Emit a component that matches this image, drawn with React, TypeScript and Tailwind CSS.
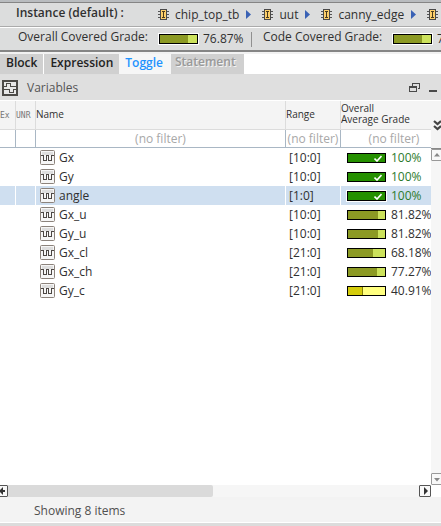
import React from "react";

type Variable = { name: string; range: string; grade: number };

const variables: Variable[] = [
  { name: "Gx", range: "[10:0]", grade: 100 },
  { name: "Gy", range: "[10:0]", grade: 100 },
  { name: "angle", range: "[1:0]", grade: 100 },
  { name: "Gx_u", range: "[10:0]", grade: 81.82 },
  { name: "Gy_u", range: "[10:0]", grade: 81.82 },
  { name: "Gx_cl", range: "[21:0]", grade: 68.18 },
  { name: "Gx_ch", range: "[21:0]", grade: 77.27 },
  { name: "Gy_c", range: "[21:0]", grade: 40.91 },
];

const path = ["chip_top_tb", "uut", "canny_edge"];

function ChipIcon() {
  return (
    <svg width="11" height="12" viewBox="0 0 11 12" className="shrink-0" shapeRendering="crispEdges" aria-hidden="true">
      <path d="M0 2.5h11M0 5.5h11M0 8.5h11" stroke="#555" />
      <rect x="2.5" y="0.5" width="6" height="10" fill="#ffd06a" stroke="#4a4a4a" />
      <path d="M4 2.5h3M5.5 2v7M4 8.5h3" stroke="#4a3b1c" />
    </svg>
  );
}

function CrumbArrow() {
  return (
    <svg width="5" height="9" viewBox="0 0 5 9" className="shrink-0" aria-hidden="true">
      <path d="M0 0L5 4.5L0 9Z" fill="#3a62b5" />
    </svg>
  );
}

function WaveIcon() {
  return (
    <svg width="15" height="15" viewBox="0 0 15 15" className="shrink-0" aria-hidden="true">
      <rect x="0.5" y="0.5" width="14" height="14" rx="1" fill="#f6f6f6" stroke="#8c837c" />
      <rect x="2" y="2" width="11" height="3" fill="#dedede" />
      <path d="M1 5.5H3.5V10.5H6.5V5.5H8.5V10.5H11.5V5.5H14" fill="none" stroke="#4c4744" shapeRendering="crispEdges" />
    </svg>
  );
}

function GradeBar({ grade, outlined = false }: { grade: number; outlined?: boolean }) {
  const full = grade === 100;
  const low = grade < 50;
  const rest = low ? "bg-[#ffff80]" : "bg-[#cce25c]";
  const fill = full ? "bg-[#259000]" : low ? "bg-[#d4cc0c] border-r border-[#84800a]" : "bg-[#8c9a24]";
  return (
    <span
      className={`relative block h-[10px] w-[39px] shrink-0 border border-black ${rest} ${outlined ? "outline outline-white" : ""}`}
    >
      <span className={`block h-full ${fill}`} style={{ width: `${grade}%` }} />
      {full && (
        <svg width="8" height="7" viewBox="0 0 8 7" className="absolute right-[3px] top-px" aria-hidden="true">
          <path d="M0.5 3.5L3 6L7.5 1" fill="none" stroke="#fff" strokeWidth="1.6" />
        </svg>
      )}
    </span>
  );
}

function ScrollButton({ label, glyph, size, dark }: { label: string; glyph: string; size: string; dark?: boolean }) {
  return (
    <button
      aria-label={label}
      className={`flex shrink-0 items-center justify-center rounded-[1px] border bg-[#f8f8f8] ${size} ${dark ? "border-[#555] text-[#333]" : "border-[#999] text-[#888]"}`}
    >
      <svg width="8" height="8" viewBox="0 0 8 8" className="shrink-0" aria-hidden="true">
        <path d={glyph} fill="currentColor" />
      </svg>
    </button>
  );
}

const headCell = "overflow-hidden whitespace-nowrap border-b border-[#dcdcdc] p-0 text-left font-normal";
const filterCell = "border-b border-[#a9b7c4] bg-white p-0";
const filterInput = "block h-[17px] w-full bg-transparent text-center text-[12px] outline-none placeholder:text-[#a8a8a8]";

export default function App() {
  return (
    <main className="flex h-screen flex-col overflow-hidden bg-white font-['Open_Sans','Noto_Sans',sans-serif] text-[12px] leading-4 text-[#303030]">
      <div className="h-[3px] shrink-0 border-b border-[#858585] bg-[#b9bcbf]" />
      <nav aria-label="Instance" className="flex h-6 shrink-0 items-center whitespace-nowrap border-b border-[#ababab] bg-[#dcdddd] pl-4">
        <span className="w-[142px] shrink-0 pb-1 font-semibold">Instance (default) :</span>
        {path.map((item) => (
          <React.Fragment key={item}>
            <a href="#" className="flex shrink-0 items-center gap-[6px]">
              <ChipIcon />
              {item}
            </a>
            <span className="pl-[7px] pr-[11px]">
              <CrumbArrow />
            </span>
          </React.Fragment>
        ))}
        <ChipIcon />
      </nav>
      <div className="mt-px flex h-6 shrink-0 items-center whitespace-nowrap border-b-2 border-[#858585] bg-[#dcdddd] pl-[18px]">
        <span className="w-[141px] shrink-0 pb-[5px]">Overall Covered Grade:</span>
        <GradeBar grade={76.87} outlined />
        <span className="w-[53px] shrink-0 pl-[5px]">76.87%</span>
        <span className="h-[15px] shrink-0 border-l border-[#909090]" />
        <span className="w-[141px] shrink-0 pb-[5px] pl-[11px]">Code Covered Grade:</span>
        <GradeBar grade={76.87} outlined />
        <span className="pl-[5px]">76.87%</span>
      </div>
      <div role="tablist" className="flex h-[23px] shrink-0 border-b border-t-2 border-b-[#dedede] border-t-[#f2f2f2] bg-white">
        <button role="tab" className="mr-px bg-[#d0d0d0] px-[6px] pb-0.5 font-semibold text-[#222]">Block</button>
        <button role="tab" className="bg-[#d0d0d0] px-[6px] pb-0.5 font-semibold text-[#222]">Expression</button>
        <button role="tab" aria-selected="true" className="bg-[#f6f6f6] pb-0.5 pl-[6px] pr-2 font-semibold text-[#1e93ff]">Toggle</button>
        <button role="tab" disabled className="bg-[#d0d0d0] px-1 pb-1 pr-2 font-semibold text-[#999] [text-shadow:1px_1px_#f4f4f4]">Statement</button>
      </div>
      <header className="flex h-[26px] shrink-0 items-center border-b border-white bg-[#dfdfdf] pl-0.5 pr-1">
        <svg width="16" height="16" viewBox="0 0 16 16" aria-hidden="true">
          <rect x="1" y="1" width="14" height="14" fill="#e8e8e8" stroke="#4c4a47" strokeWidth="2" />
          <path d="M2 6.5H4.5V3.5H8.5V6.5H14M2 9.5H7.5V12.5H11.5V9.5H14" fill="none" stroke="#4c4a47" shapeRendering="crispEdges" />
        </svg>
        <h2 className="flex-1 pl-[9px] text-[#555]">Variables</h2>
        <button aria-label="Restore panel">
          <svg width="11" height="10" viewBox="0 0 11 10" shapeRendering="crispEdges" aria-hidden="true">
            <path d="M3 0.5H10.5V5.5H9M3.5 1V3M0.5 4V8.5H7.5V4" fill="none" stroke="#4a4a4a" />
            <path d="M0 4H8" stroke="#4a4a4a" strokeWidth="2" />
          </svg>
        </button>
        <button aria-label="Minimize panel" className="-mr-1 ml-[9px] w-3">
          <svg width="8" height="10" viewBox="0 0 8 10" aria-hidden="true">
            <path d="M0 8H8" stroke="#4a4a4a" strokeWidth="2" />
          </svg>
        </button>
      </header>
      <section className="flex min-h-0 flex-1">
        <div className="flex min-w-0 flex-1 flex-col">
          <div className="min-h-0 flex-1 overflow-hidden">
            <table className="w-full table-fixed border-separate border-spacing-0">
              <colgroup>
                <col className="w-4" />
                <col className="w-5" />
                <col />
                <col className="w-[55px]" />
                <col className="w-[90px]" />
              </colgroup>
              <thead>
                <tr className="h-[29px] bg-[#f4f4f4] text-[10px] leading-[11px]">
                  <th className={`${headCell} border-r font-['DejaVu_Sans_Mono',monospace] text-[8px] text-[#777]`}>Ex</th>
                  <th className={`${headCell} border-r font-['DejaVu_Sans_Mono',monospace] text-[8px] text-[#777]`}>UNR</th>
                  <th className={`${headCell} border-r pb-0.5`}>Name</th>
                  <th className={`${headCell} border-r pb-0.5`}>Range</th>
                  <th className={`${headCell} pb-0.5`}>
                    <span className="block">Overall</span>
                    <span className="block">Average Grade</span>
                  </th>
                </tr>
                <tr className="h-[18px]">
                  <td className={`${filterCell} border-r`} />
                  <td className={`${filterCell} border-r`} />
                  <td className={`${filterCell} border-r`}>
                    <input aria-label="Filter by name" placeholder="(no filter)" className={filterInput} />
                  </td>
                  <td className={`${filterCell} border-r`}>
                    <input aria-label="Filter by range" placeholder="(no filter)" className={filterInput} />
                  </td>
                  <td className={filterCell}>
                    <input aria-label="Filter by grade" placeholder="(no filter)" className={`${filterInput} pl-4`} />
                  </td>
                </tr>
              </thead>
              <tbody>
                {variables.map((v) => {
                  const selected = v.name === "angle";
                  return (
                    <tr key={v.name} aria-selected={selected} className={`h-[19px] ${selected ? "bg-[#cfdff0]" : ""}`}>
                      <td className="border-r border-white p-0" />
                      <td className="border-r border-white p-0" />
                      <td className="border-r border-white p-0">
                        <span className="flex items-center gap-1 pl-1">
                          <WaveIcon />
                          {v.name}
                        </span>
                      </td>
                      <td className="border-r border-white p-0 pl-[3px]">{v.range}</td>
                      <td className="overflow-hidden p-0">
                        <span className={`flex items-center gap-[5px] pl-[6px] ${v.grade === 100 ? "text-[#2c7a2c]" : ""}`}>
                          <GradeBar grade={v.grade} outlined={selected} />
                          {v.grade}%
                        </span>
                      </td>
                    </tr>
                  );
                })}
              </tbody>
            </table>
          </div>
          <div className="flex h-3 shrink-0 bg-[#f6f6f6]">
            <ScrollButton label="Scroll left" glyph="M5 0V8L1 4Z M4 3H7V5H4Z" size="-ml-1 h-3 w-3" dark />
            <div className="h-3 w-[205px] rounded-r-[2px] bg-[#dadada]" />
            <ScrollButton label="Scroll right" glyph="M3 0V8L7 4Z" size="ml-auto h-3 w-3" dark />
          </div>
        </div>
        <div className="flex w-[10px] shrink-0 flex-col overflow-hidden">
          <button aria-label="More columns" className="flex h-12 shrink-0 items-center border-b border-[#888] bg-[#f4f4f4] pl-0.5">
            <svg width="10" height="12" viewBox="0 0 10 12" className="shrink-0" aria-hidden="true">
              <path d="M1 2L4.5 5L8 2M1 7L4.5 10L8 7" fill="none" stroke="#444" strokeWidth="2.2" />
            </svg>
          </button>
          <ScrollButton label="Scroll up" glyph="M1 5.5L4 2L7 5.5Z" size="h-3 w-3" />
          <div className="flex-1 bg-[#f6f6f6]" />
          <ScrollButton label="Scroll down" glyph="M1 3L4 6.5L7 3Z" size="h-3 w-3" />
          <div className="h-3 shrink-0" />
        </div>
      </section>
      <footer className="flex h-[29px] shrink-0 flex-col bg-[#f3f3f3] text-[#505050]">
        <p className="flex-1 pl-[34px] pt-[6px]">Showing 8 items</p>
        <div className="h-1 border-t border-white bg-[#dcdcdc]" />
      </footer>
    </main>
  );
}
